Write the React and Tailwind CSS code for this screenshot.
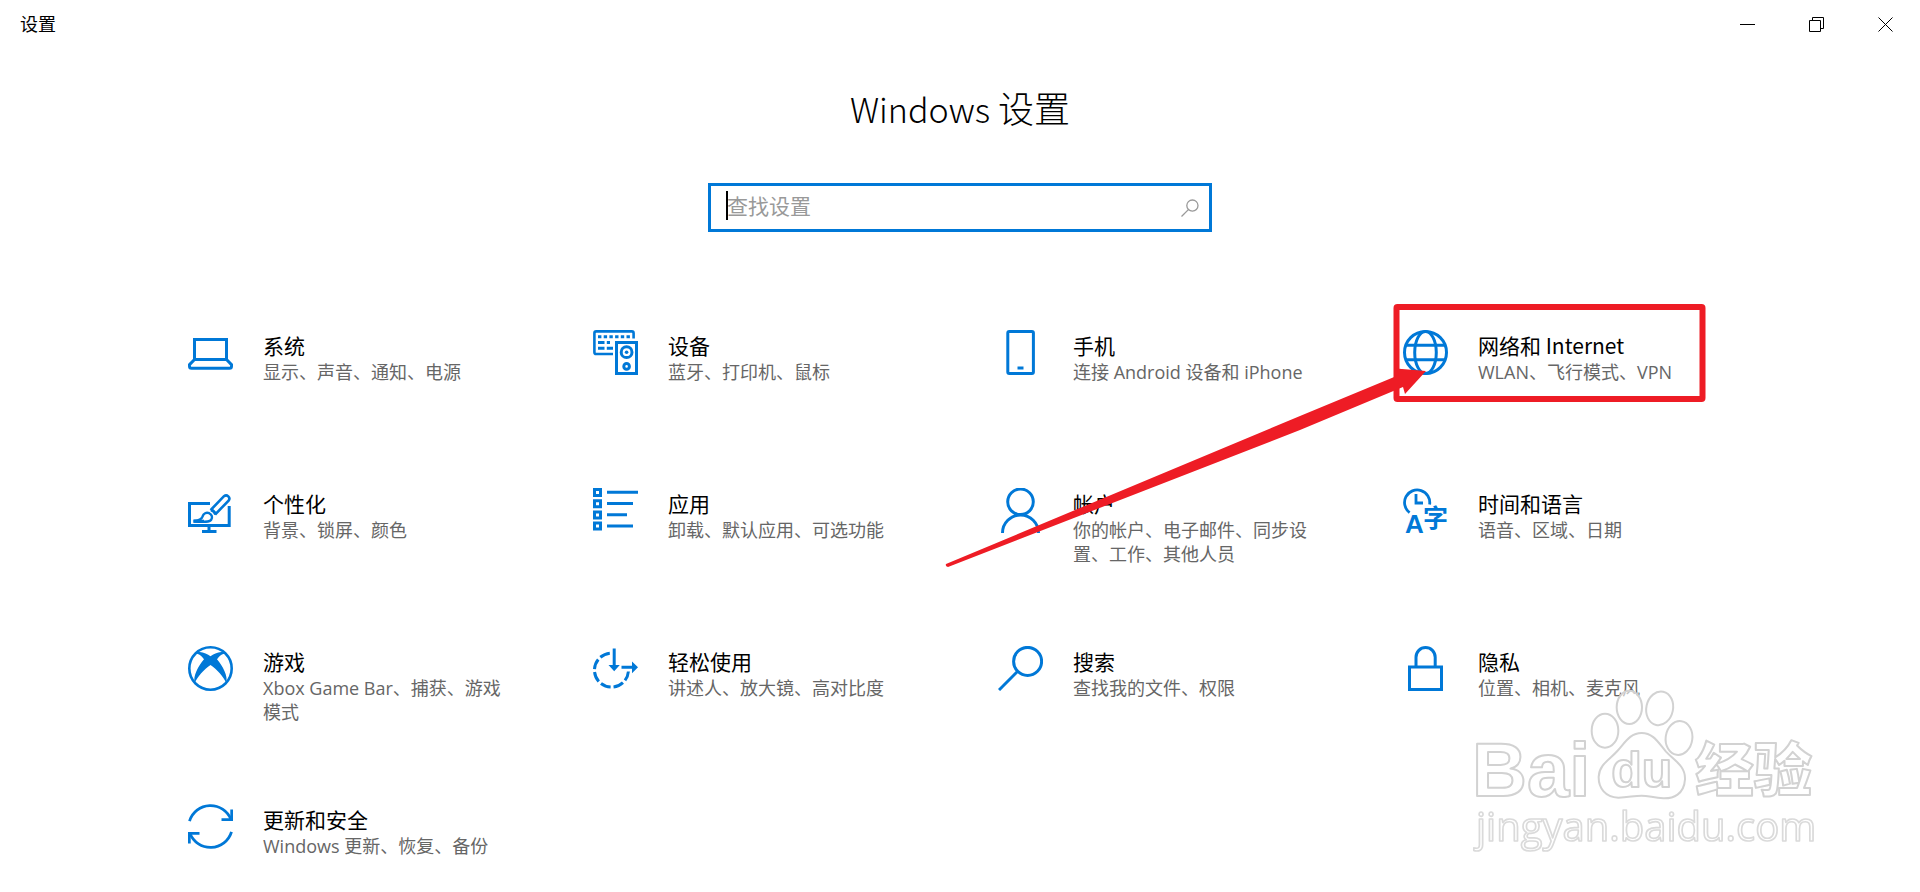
import React, { useState } from "react";

function Icon({ children }) {
  return (
    <svg
      viewBox="0 0 45 45"
      fill="none"
      stroke="currentColor"
      strokeWidth="3"
      className="w-[45px] h-[45px] shrink-0 text-[#0078d7]"
      aria-hidden="true"
    >
      {children}
    </svg>
  );
}

const SystemIcon = () => (
  <Icon>
    <path d="M6.5 29.5V9.5H38.5V29.5Z" />
    <path d="M6.5 29.5L1.5 34.7V36.2a2 2 0 0 0 2 2H41.5a2 2 0 0 0 2-2V34.7L38.5 29.5" />
  </Icon>
);

const DevicesIcon = () => (
  <Icon>
    <path d="M20 24H3.2A1.8 1.8 0 0 1 1.4 22.2V3.2A1.8 1.8 0 0 1 3.2 1.4H38.8A1.8 1.8 0 0 1 40.6 3.2V8.5" strokeWidth="2.6" />
    <path d="M5 6.8H38" strokeDasharray="3.4 2.3" />
    <path d="M5 12.6H11.5M13.8 12.6H17M5 18.2H11.5M13.8 18.2H20" />
    <rect x="23.5" y="12.5" width="20" height="31" />
    <circle cx="33.6" cy="22.2" r="5.4" />
    <circle cx="33.6" cy="22.2" r="1.8" fill="currentColor" stroke="none" />
    <circle cx="33.6" cy="36.4" r="2.8" />
  </Icon>
);

const PhoneIcon = () => (
  <Icon>
    <rect x="9.8" y="1.5" width="25.6" height="42" rx="1.5" />
    <path d="M19.5 38H25.5" />
  </Icon>
);

const NetworkIcon = () => (
  <Icon>
    <circle cx="22.5" cy="22.5" r="21" />
    <ellipse cx="22.5" cy="22.5" rx="10.8" ry="21" />
    <path d="M3 15.2H42M3 29.8H42" />
  </Icon>
);

const PersonalizationIcon = () => (
  <Icon>
    <path d="M22 15.5H1.5V37.5H41.2V18" />
    <path d="M21 38V43.5M14 43.5H28.5" />
    <path d="M23.5 21.2L36 8.2A3.2 3.2 0 0 1 40.6 12.6L28 25.6Z" fill="#fff" strokeWidth="2.6" />
    <path d="M22.8 22C25 22.6 26.6 24.4 27.4 26.6" strokeWidth="2.4" />
    <path d="M5.5 32.6C10 32.8 13.6 31.6 14.6 28.4C15.4 25.4 18.4 24 21.2 25.2C24 26.6 24.8 29.6 23.2 31.8C21.4 34.2 17 34.2 5.5 33.6" fill="#fff" strokeWidth="2.4" />
    <path d="M5.5 33.2H16" />
  </Icon>
);

const AppsIcon = () => (
  <Icon>
    <path d="M1.5 1.5h6v6h-6zM1.5 12.7h6v6h-6zM1.5 23.9h6v6h-6zM1.5 35.1h6v6h-6z" />
    <path d="M14 4.2H45M14 15.5H40M14 26.8H34M14 38.1H40" />
  </Icon>
);

const AccountsIcon = () => (
  <Icon>
    <circle cx="22.5" cy="13.8" r="12.8" />
    <path d="M4.5 45A18 18 0 0 1 40.5 45" />
  </Icon>
);

const TimeIcon = () => (
  <Icon>
    <path d="M6.6 24.6A12.6 12.6 0 1 1 26.6 16.5" strokeWidth="2.8" />
    <path d="M13 6V15H20" strokeWidth="2.8" />
    <text x="2" y="45" fontSize="26" fontWeight="700" fontFamily="Liberation Sans, sans-serif" fill="currentColor" stroke="none">A</text>
    <text x="20" y="39" fontSize="25" fontWeight="700" fontFamily="Noto Sans CJK SC, sans-serif" fill="currentColor" stroke="none">字</text>
  </Icon>
);

const GamingIcon = () => (
  <Icon>
    <circle cx="22.5" cy="22.5" r="21.2" strokeWidth="2.6" />
    <path
      d="M7 7.5C11.5 3.8 18.5 7.2 22.5 10.2C26.5 7.2 33.5 3.8 38 7.5C35 7 32 9.2 29 13.2C35 20.5 40 29.5 38.4 37.4C35.5 30.5 29 23.5 22.5 19C16 23.5 9.5 30.5 6.6 37.4C5 29.5 10 20.5 16 13.2C13 9.2 10 7 7 7.5Z"
      fill="currentColor"
      stroke="none"
    />
  </Icon>
);

const EaseIcon = () => (
  <Icon>
    <path d="M16.8 7.2A17 17 0 1 0 35.4 25.5" strokeDasharray="10.4 3" />
    <path d="M21.2 2.5V20M28.5 21.3H40" />
    <path d="M15.5 19H26.8L21.2 25.2ZM39 15.4L45 21.3L39 27.2Z" fill="currentColor" stroke="none" />
  </Icon>
);

const SearchIcon = () => (
  <Icon>
    <circle cx="29.6" cy="15.4" r="14" />
    <path d="M19.7 25.3L1 44" />
  </Icon>
);

const PrivacyIcon = () => (
  <Icon>
    <rect x="6.5" y="21" width="32" height="22.5" />
    <path d="M13 21V11.3A9.6 9.8 0 0 1 32.2 11.3V21" />
  </Icon>
);

const UpdateIcon = () => (
  <Icon>
    <path d="M1.5 17.2A22 22 0 0 1 43 15.5" strokeWidth="2.8" />
    <path d="M33.5 15.7H43.7V5.5" strokeWidth="2.8" />
    <path d="M43.5 27.8A22 22 0 0 1 2 29.5" strokeWidth="2.8" />
    <path d="M11.5 29.3H1.3V39.5" strokeWidth="2.8" />
  </Icon>
);

const categories = [
  { title: "系统", desc: "显示、声音、通知、电源", href: "#system", icon: SystemIcon },
  { title: "设备", desc: "蓝牙、打印机、鼠标", href: "#devices", icon: DevicesIcon },
  { title: "手机", desc: "连接 Android 设备和 iPhone", href: "#phone", icon: PhoneIcon },
  { title: "网络和 Internet", desc: "WLAN、飞行模式、VPN", href: "#network", icon: NetworkIcon, marked: true },
  { title: "个性化", desc: "背景、锁屏、颜色", href: "#personalization", icon: PersonalizationIcon },
  { title: "应用", desc: "卸载、默认应用、可选功能", href: "#apps", icon: AppsIcon },
  { title: "帐户", desc: "你的帐户、电子邮件、同步设置、工作、其他人员", href: "#accounts", icon: AccountsIcon },
  { title: "时间和语言", desc: "语音、区域、日期", href: "#time", icon: TimeIcon },
  { title: "游戏", desc: "Xbox Game Bar、捕获、游戏模式", href: "#gaming", icon: GamingIcon },
  { title: "轻松使用", desc: "讲述人、放大镜、高对比度", href: "#ease", icon: EaseIcon },
  { title: "搜索", desc: "查找我的文件、权限", href: "#search", icon: SearchIcon },
  { title: "隐私", desc: "位置、相机、麦克风", href: "#privacy", icon: PrivacyIcon },
  { title: "更新和安全", desc: "Windows 更新、恢复、备份", href: "#update", icon: UpdateIcon },
];

function TitleBar() {
  return (
    <header className="flex items-center justify-between h-12">
      <span className="pl-5 text-[18px] leading-6">设置</span>
      <div className="flex h-full">
        <button aria-label="最小化" className="w-[69px] flex items-center justify-center hover:bg-gray-200">
          <svg width="15" height="15" viewBox="0 0 15 15" stroke="#000" fill="none">
            <path d="M0 7.5H15" />
          </svg>
        </button>
        <button aria-label="还原" className="w-[69px] flex items-center justify-center hover:bg-gray-200">
          <svg width="15" height="15" viewBox="0 0 15 15" stroke="#000" fill="none">
            <path d="M.5 3.5H11.5V14.5H.5ZM3.5 3.5V.5H14.5V11.5H11.5" />
          </svg>
        </button>
        <button aria-label="关闭" className="w-[69px] flex items-center justify-center hover:bg-red-600">
          <svg width="15" height="15" viewBox="0 0 15 15" stroke="#000" fill="none">
            <path d="M.5 .5L14.5 14.5M14.5 .5L.5 14.5" />
          </svg>
        </button>
      </div>
    </header>
  );
}

function SearchBox() {
  const [query, setQuery] = useState("");

  return (
    <div className="relative flex items-center w-full max-w-[504px] h-[49px] mt-[52px] border-3 border-[#0078d7] bg-white">
      <input
        type="text"
        aria-label="查找设置"
        placeholder="查找设置"
        value={query}
        onChange={(e) => setQuery(e.target.value)}
        className="flex-1 min-w-0 h-full pl-4 pb-1 text-[21px] leading-7 outline-none caret-transparent placeholder:text-[#999999]"
      />
      {/* Text cursor */}
      {!query && <span className="absolute left-[15px] top-[5px] w-0.5 h-[29px] bg-black" />}
      <svg width="18" height="18" viewBox="0 0 18 18" className="mr-2.5 shrink-0" stroke="#999" strokeWidth="1.3" fill="none">
        <circle cx="11.4" cy="6.6" r="5.6" />
        <path d="M7.4 10.6L.5 17.5" />
      </svg>
    </div>
  );
}

// Red frame and arrow drawn over a tile
function Marker() {
  return (
    <svg
      width="770"
      height="270"
      viewBox="940 300 770 270"
      className="absolute right-[60px] top-[-30px] max-w-none pointer-events-none z-10"
      aria-hidden="true"
    >
      <rect x="1396.5" y="307" width="306" height="92" rx="1" fill="none" stroke="#ee1c25" strokeWidth="6" />
      <path
        d="M946 564Q945 566 948 567L1300 430L1403 387L1405 394L1426 371L1396 368.500L1399 375L1300 416Z"
        fill="#ee1c25"
      />
    </svg>
  );
}

function Tile({ title, desc, href, icon: TileIcon, marked }) {
  return (
    <div className="relative min-h-[78px]">
      <a href={href} className="flex items-start gap-[30px] pl-[38px] pr-[46px]">
        <TileIcon />
        <span className="flex flex-col gap-px pt-px">
          <span className="text-[21px] leading-7 font-['Noto_Sans_CJK_SC',sans-serif]">{title}</span>
          <span className="text-[18px] leading-6 text-[#666666]">{desc}</span>
        </span>
      </a>
      {marked && <Marker />}
    </div>
  );
}

function Watermark() {
  return (
    <svg
      viewBox="270 165 1050 510"
      className="absolute right-[100px] bottom-[36px] w-[350px] h-[170px] pointer-events-none"
      fill="#fff"
      fillOpacity="0.6"
      stroke="#d2d2d2"
      strokeWidth="6"
      strokeLinejoin="round"
    >
      <g filter="url(#soften)">
        <ellipse cx="675" cy="299" rx="40" ry="51" />
        <ellipse cx="748" cy="229" rx="38" ry="50" />
        <ellipse cx="839" cy="232" rx="40" ry="51" transform="rotate(12 839 232)" />
        <ellipse cx="897" cy="321" rx="40" ry="51" transform="rotate(8 897 321)" />
        <path d="M785 306C820 306 835 335 858 362C882 388 917 405 915 445C912 490 880 503 850 502C820 500 805 494 785 494C760 494 745 500 715 500C675 498 655 470 656 437C658 400 690 385 712 360C735 335 750 306 785 306Z" />
        <text x="276" y="494" fontSize="228" fontWeight="700" fontFamily="Liberation Sans, sans-serif">Bai</text>
        <text x="694" y="468" fontSize="150" fontWeight="700" fontFamily="Liberation Sans, sans-serif">du</text>
        <text x="946" y="480" fontSize="175" fontWeight="900" fontFamily="Noto Sans CJK SC, sans-serif">经验</text>
        <text x="288" y="630" fontSize="120" strokeWidth="5" stroke="#dadada" fontFamily="Open Sans, sans-serif">jingyan.baidu.com</text>
      </g>
      <filter id="soften">
        <feGaussianBlur stdDeviation="2" />
      </filter>
    </svg>
  );
}

export default function App() {
  return (
    <div className="relative min-h-screen overflow-hidden bg-white text-black font-['Open_Sans','Noto_Sans_CJK_SC',sans-serif]">
      <TitleBar />
      <main className="flex flex-col items-center">
        <h1 className="mt-[37px] text-[36px] leading-[44px] font-light font-['Noto_Sans_CJK_SC',sans-serif]">
          <span className="text-[34px]">Windows</span> 设置
        </h1>
        <SearchBox />
        <nav className="grid grid-cols-4 gap-y-20 w-full max-w-[1620px] mt-[98px]">
          {categories.map((item) => (
            <Tile key={item.href} {...item} />
          ))}
        </nav>
      </main>
      <Watermark />
    </div>
  );
}
